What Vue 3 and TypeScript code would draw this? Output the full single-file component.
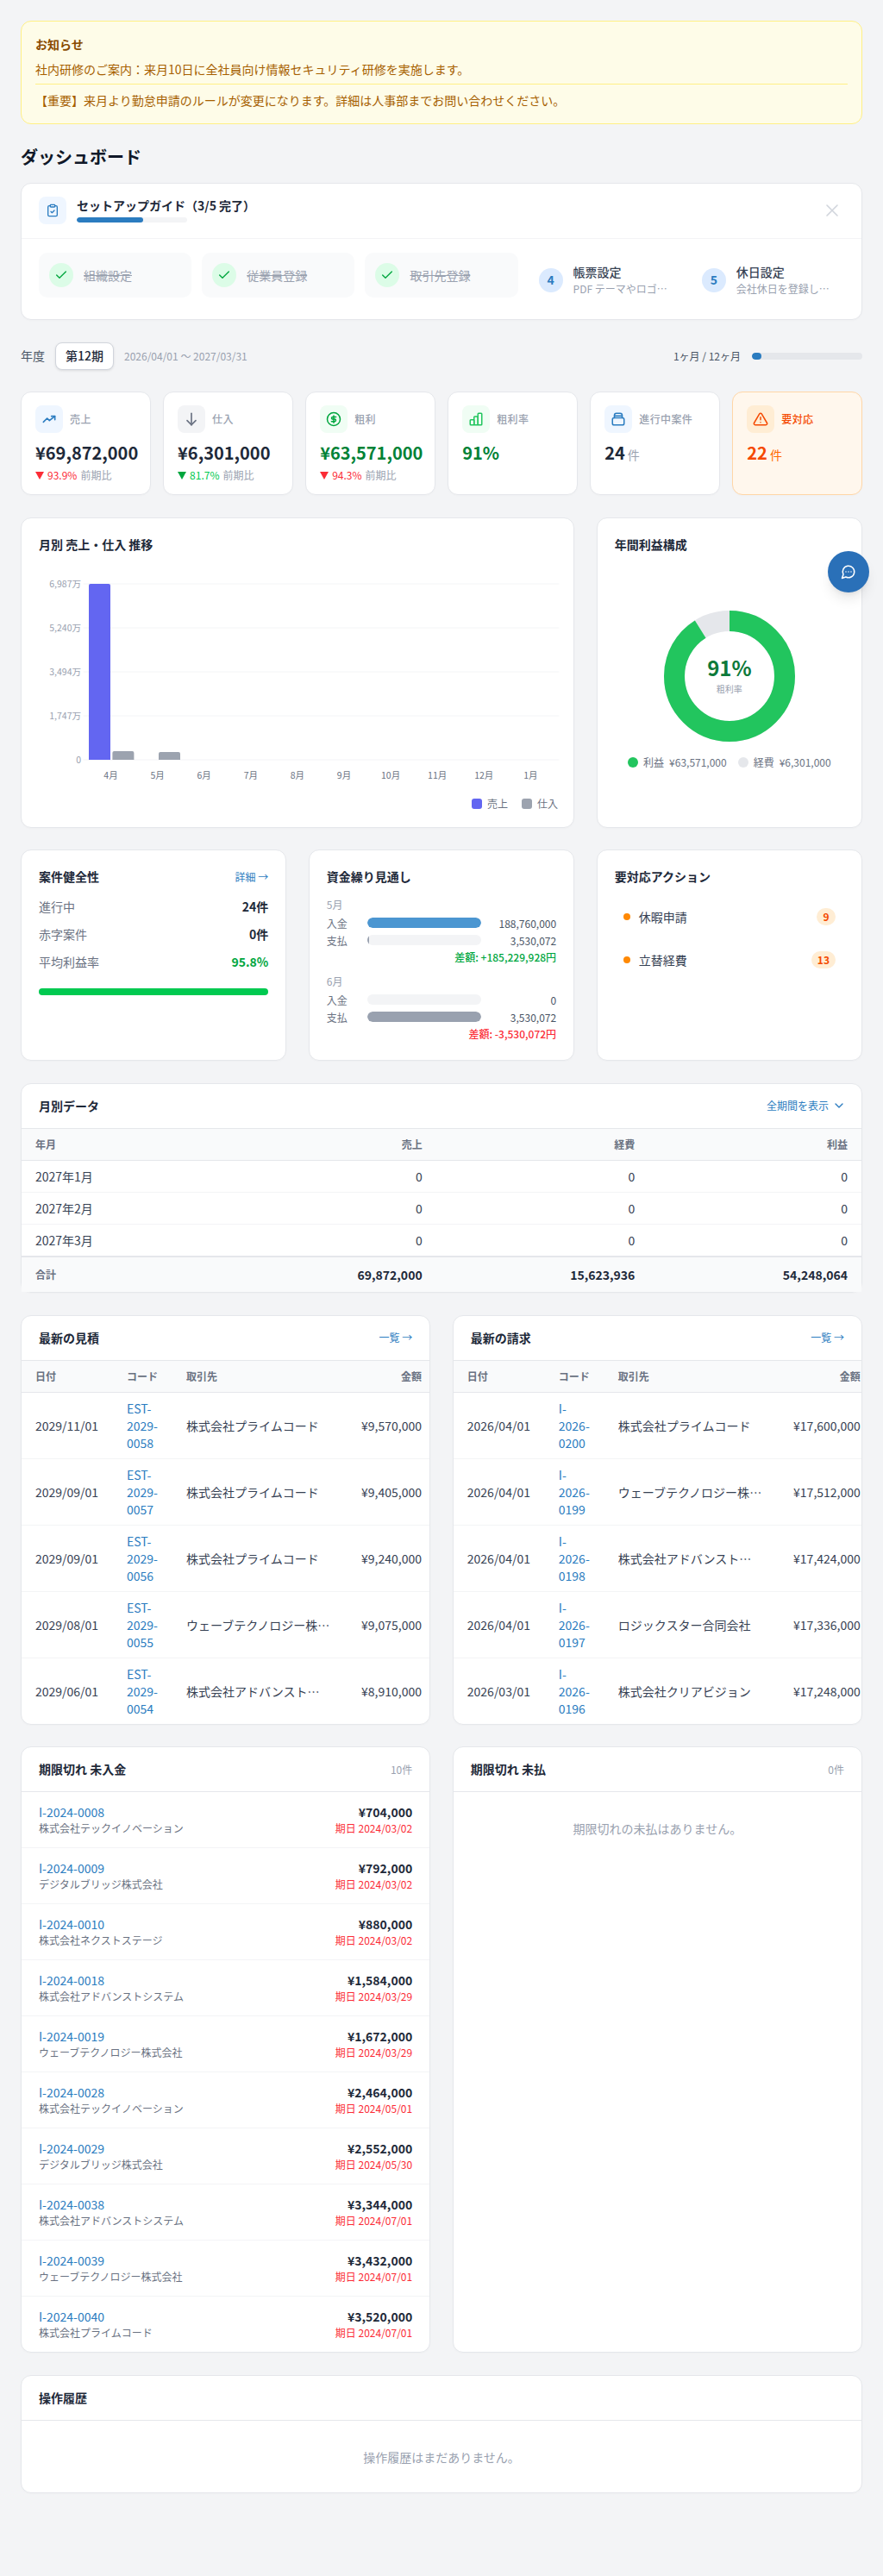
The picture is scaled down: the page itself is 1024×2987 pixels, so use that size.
<script setup lang="ts">
const steps = [
  { done: true, title: '組織設定' },
  { done: true, title: '従業員登録' },
  { done: true, title: '取引先登録' },
  { done: false, n: 4, title: '帳票設定', desc: 'PDF テーマやロゴを設定します' },
  { done: false, n: 5, title: '休日設定', desc: '会社休日を登録します' },
]
const kpis = [
  { key: 'blue', icon: 'trend', label: '売上', value: '¥69,872,000', arrow: 'down-red', pct: '93.9%', cls: '' },
  { key: 'gray', icon: 'down', label: '仕入', value: '¥6,301,000', arrow: 'down-green', pct: '81.7%', cls: '' },
  { key: 'green', icon: 'dollar', label: '粗利', value: '¥63,571,000', arrow: 'down-red', pct: '94.3%', cls: 'val-green' },
  { key: 'green', icon: 'bars', label: '粗利率', value: '91%', arrow: '', pct: '', cls: 'val-green' },
  { key: 'blue', icon: 'case', label: '進行中案件', value: '24', unit: '件', arrow: '', pct: '', cls: '' },
  { key: 'orange', icon: 'warn', label: '要対応', value: '22', unit: '件', arrow: '', pct: '', cls: 'val-orange' },
]
const gridY = [
  { y: 677, t: '6,987万' },
  { y: 728, t: '5,240万' },
  { y: 779, t: '3,494万' },
  { y: 830, t: '1,747万' },
  { y: 881, t: '0' },
]
const months = ['4月', '5月', '6月', '7月', '8月', '9月', '10月', '11月', '12月', '1月']
const health = [
  { l: '進行中', v: '24件', c: '' },
  { l: '赤字案件', v: '0件', c: '' },
  { l: '平均利益率', v: '95.8%', c: 'good' },
]
const flows = [
  { m: '5月', inc: '188,760,000', incW: 100, out: '3,530,072', outW: 1.9, diff: '差額: +185,229,928円', c: 'pos' },
  { m: '6月', inc: '0', incW: 0, out: '3,530,072', outW: 100, diff: '差額: -3,530,072円', c: 'neg' },
]
const actions = [
  { t: '休暇申請', n: 9 },
  { t: '立替経費', n: 13 },
]
const monthly = [
  ['2027年1月', '0', '0', '0'],
  ['2027年2月', '0', '0', '0'],
  ['2027年3月', '0', '0', '0'],
]
const estimates = [
  ['2029/11/01', 'EST-2029-0058', '株式会社プライムコード', '¥9,570,000'],
  ['2029/09/01', 'EST-2029-0057', '株式会社プライムコード', '¥9,405,000'],
  ['2029/09/01', 'EST-2029-0056', '株式会社プライムコード', '¥9,240,000'],
  ['2029/08/01', 'EST-2029-0055', 'ウェーブテクノロジー株式会社', '¥9,075,000'],
  ['2029/06/01', 'EST-2029-0054', '株式会社アドバンストシステム', '¥8,910,000'],
]
const invoices = [
  ['2026/04/01', 'I-2026-0200', '株式会社プライムコード', '¥17,600,000'],
  ['2026/04/01', 'I-2026-0199', 'ウェーブテクノロジー株式会社', '¥17,512,000'],
  ['2026/04/01', 'I-2026-0198', '株式会社アドバンストシステム', '¥17,424,000'],
  ['2026/04/01', 'I-2026-0197', 'ロジックスター合同会社', '¥17,336,000'],
  ['2026/03/01', 'I-2026-0196', '株式会社クリアビジョン', '¥17,248,000'],
]
const overdue = [
  ['I-2024-0008', '株式会社テックイノベーション', '¥704,000', '2024/03/02'],
  ['I-2024-0009', 'デジタルブリッジ株式会社', '¥792,000', '2024/03/02'],
  ['I-2024-0010', '株式会社ネクストステージ', '¥880,000', '2024/03/02'],
  ['I-2024-0018', '株式会社アドバンストシステム', '¥1,584,000', '2024/03/29'],
  ['I-2024-0019', 'ウェーブテクノロジー株式会社', '¥1,672,000', '2024/03/29'],
  ['I-2024-0028', '株式会社テックイノベーション', '¥2,464,000', '2024/05/01'],
  ['I-2024-0029', 'デジタルブリッジ株式会社', '¥2,552,000', '2024/05/30'],
  ['I-2024-0038', '株式会社アドバンストシステム', '¥3,344,000', '2024/07/01'],
  ['I-2024-0039', 'ウェーブテクノロジー株式会社', '¥3,432,000', '2024/07/01'],
  ['I-2024-0040', '株式会社プライムコード', '¥3,520,000', '2024/07/01'],
]
</script>

<template>
  <div class="page">
    <section class="notice">
      <div class="notice-title">お知らせ</div>
      <div class="notice-item first">社内研修のご案内：来月10日に全社員向け情報セキュリティ研修を実施します。</div>
      <div class="notice-item">【重要】来月より勤怠申請のルールが変更になります。詳細は人事部までお問い合わせください。</div>
    </section>

    <h1 class="page-title">ダッシュボード</h1>

    <div class="stack">
      <section class="card setup">
        <div class="setup-head">
          <div class="setup-icon">
            <svg viewBox="0 0 24 24" class="i16 c-primary"><rect x="8" y="2" width="8" height="4" rx="1"/><path d="M16 4h2a2 2 0 0 1 2 2v14a2 2 0 0 1-2 2H6a2 2 0 0 1-2-2V6a2 2 0 0 1 2-2h2"/><path d="m9 14 2 2 4-4"/></svg>
          </div>
          <div class="setup-meta">
            <div class="setup-title">セットアップガイド（3/5 完了）</div>
            <div class="setup-track"><div class="setup-fill"></div></div>
          </div>
          <svg viewBox="0 0 24 24" class="close"><path d="M18 6 6 18M6 6l12 12"/></svg>
        </div>
        <div class="setup-steps">
          <div v-for="s in steps" :key="s.title" class="step" :class="{ done: s.done }">
            <div class="step-dot">
              <svg v-if="s.done" viewBox="0 0 24 24" class="i16"><path d="M20 6 9 17l-5-5"/></svg>
              <span v-else>{{ s.n }}</span>
            </div>
            <div class="step-text">
              <div class="step-title">{{ s.title }}</div>
              <div v-if="s.desc" class="step-desc">{{ s.desc }}</div>
            </div>
          </div>
        </div>
      </section>

      <div class="period">
        <span class="period-label">年度</span>
        <span class="period-btn">第12期</span>
        <span class="period-range">2026/04/01 〜 2027/03/31</span>
        <span class="period-prog">1ヶ月 / 12ヶ月</span>
        <span class="period-track"><span class="period-fill"></span></span>
      </div>

      <div class="kpis">
        <div v-for="k in kpis" :key="k.label" class="card kpi" :class="{ 'kpi-alert': k.key === 'orange' }">
          <div class="kpi-head">
            <div class="kpi-icon" :class="'bg-' + k.key">
              <svg v-if="k.icon === 'trend'" viewBox="0 0 24 24" class="i16 thick"><path d="m2 17 6.5-6.5 4 4L22 7"/><path d="M16 7h6v6"/></svg>
              <svg v-else-if="k.icon === 'down'" viewBox="0 0 24 24" class="i20"><path d="M12 4v16"/><path d="m6 14 6 6 6-6"/></svg>
              <svg v-else-if="k.icon === 'dollar'" viewBox="0 0 24 24" class="i18"><circle cx="12" cy="12" r="10"/><path d="M15.5 8.5h-5a1.75 1.75 0 0 0 0 3.5h3a1.75 1.75 0 0 1 0 3.5h-5"/><path d="M12 6.5v11"/></svg>
              <svg v-else-if="k.icon === 'bars'" viewBox="0 0 24 24" class="i18 bars"><rect x="3" y="13" width="6" height="8" rx="1"/><rect x="9" y="8" width="6" height="13" rx="1"/><rect x="15" y="3" width="6" height="18" rx="1"/></svg>
              <svg v-else-if="k.icon === 'case'" viewBox="0 0 24 24" class="i18"><rect x="3" y="10" width="18" height="11" rx="2.5"/><path d="M6 10V6a3 3 0 0 1 3-3h6a3 3 0 0 1 3 3v4"/><path d="M6 7h12"/></svg>
              <svg v-else viewBox="0 0 24 24" class="i18"><path d="M10.3 3.9 2 18a2 2 0 0 0 1.7 3h16.6a2 2 0 0 0 1.7-3L13.7 3.9a2 2 0 0 0-3.4 0Z"/><path d="M12 9v4"/><path d="M12 17h.01"/></svg>
            </div>
            <span class="kpi-label">{{ k.label }}</span>
          </div>
          <div class="kpi-value" :class="k.cls">{{ k.value }}<span v-if="k.unit" class="kpi-unit">{{ k.unit }}</span></div>
          <div v-if="k.pct" class="kpi-delta">
            <span class="tri" :class="k.arrow"></span>
            <span :class="k.arrow === 'down-red' ? 'pct-red' : 'pct-green'">{{ k.pct }}</span>
            <span class="delta-note">前期比</span>
          </div>
        </div>
      </div>

      <div class="grid-3">
        <section class="card pad span-2 chart-card">
          <h2 class="card-title">月別 売上・仕入 推移</h2>
          <svg class="chart" viewBox="0 0 642 300" width="642" height="300">
            <g v-for="g in gridY" :key="g.y">
              <line x1="72" :x2="623" :y1="g.y - 634" :y2="g.y - 634" class="gridline"/>
              <text x="69" :y="g.y - 630" class="axis" text-anchor="end">{{ g.t }}</text>
            </g>
            <path d="M78 45a2 2 0 0 1 2-2h21a2 2 0 0 1 2 2v202H78Z" fill="#6366f1"/>
            <path d="M105.4 239a2 2 0 0 1 2-2h21a2 2 0 0 1 2 2v8h-25Z" fill="#9ca3af"/>
            <path d="M159 240a2 2 0 0 1 2-2h21a2 2 0 0 1 2 2v7h-25Z" fill="#9ca3af"/>
            <text v-for="(m, i) in months" :key="m" :x="103.5 + i * 54.1" y="269" class="axis month" text-anchor="middle">{{ m }}</text>
          </svg>
          <div class="chart-legend">
            <span class="lg"><i class="sw sw-p"></i>売上</span>
            <span class="lg"><i class="sw sw-g"></i>仕入</span>
          </div>
        </section>

        <section class="card pad donut-card">
          <h2 class="card-title">年間利益構成</h2>
          <div class="donut-wrap">
            <svg viewBox="0 0 152 152" width="152" height="152" class="donut">
              <circle cx="76" cy="76" r="64" class="ring" stroke="#e5e7eb"/>
              <circle cx="76" cy="76" r="64" class="ring" stroke="#22c55e" stroke-dasharray="365.9 402.1" transform="rotate(-90 76 76)"/>
            </svg>
            <div class="donut-center">
              <div class="donut-pct">91%</div>
              <div class="donut-sub">粗利率</div>
            </div>
          </div>
          <div class="donut-legend">
            <span class="lg"><i class="sw round sw-dg"></i>利益<span>¥63,571,000</span></span>
            <span class="lg"><i class="sw round sw-lg"></i>経費<span>¥6,301,000</span></span>
          </div>
        </section>

        <section class="card pad short">
          <div class="title-row">
            <h2 class="card-title">案件健全性</h2>
            <a class="link">詳細 →</a>
          </div>
          <div class="health-rows">
            <div v-for="h in health" :key="h.l" class="health-row">
              <span class="health-l">{{ h.l }}</span>
              <span class="health-v" :class="h.c">{{ h.v }}</span>
            </div>
          </div>
          <div class="health-bar"></div>
        </section>

        <section class="card pad short">
          <h2 class="card-title">資金繰り見通し</h2>
          <div class="flows">
            <div v-for="f in flows" :key="f.m" class="flow">
              <div class="flow-m">{{ f.m }}</div>
              <div class="flow-row">
                <span class="flow-l">入金</span>
                <span class="flow-track"><span class="flow-fill fill-in" :style="{ width: f.incW + '%' }"></span></span>
                <span class="flow-v">{{ f.inc }}</span>
              </div>
              <div class="flow-row">
                <span class="flow-l">支払</span>
                <span class="flow-track"><span class="flow-fill fill-out" :style="{ width: f.outW + '%' }"></span></span>
                <span class="flow-v">{{ f.out }}</span>
              </div>
              <div class="flow-diff" :class="f.c">{{ f.diff }}</div>
            </div>
          </div>
        </section>

        <section class="card pad short">
          <h2 class="card-title">要対応アクション</h2>
          <div class="actions">
            <div v-for="a in actions" :key="a.t" class="action">
              <i class="a-dot"></i>
              <span class="a-text">{{ a.t }}</span>
              <span class="a-badge">{{ a.n }}</span>
            </div>
          </div>
        </section>
      </div>

      <section class="card">
        <div class="head">
          <h2 class="card-title">月別データ</h2>
          <a class="link link-all">全期間を表示
            <svg viewBox="0 0 24 24" class="i16"><path d="m6 9 6 6 6-6"/></svg>
          </a>
        </div>
        <table class="mtable">
          <thead><tr><th>年月</th><th class="r">売上</th><th class="r">経費</th><th class="r">利益</th></tr></thead>
          <tbody>
            <tr v-for="r in monthly" :key="r[0]">
              <td v-for="(c, i) in r" :key="i" :class="{ r: i > 0 }">{{ c }}</td>
            </tr>
          </tbody>
          <tfoot>
            <tr><th>合計</th><td class="r">69,872,000</td><td class="r">15,623,936</td><td class="r">54,248,064</td></tr>
          </tfoot>
        </table>
      </section>

      <div class="grid-2">
        <section class="card clip">
          <div class="head"><h2 class="card-title">最新の見積</h2><a class="link">一覧 →</a></div>
          <table class="dtable est">
            <thead><tr><th class="c1">日付</th><th class="c2">コード</th><th class="c3">取引先</th><th class="c4 r">金額</th></tr></thead>
            <tbody>
              <tr v-for="r in estimates" :key="r[1]">
                <td>{{ r[0] }}</td><td class="code">{{ r[1] }}</td><td><div class="trunc">{{ r[2] }}</div></td><td class="r">{{ r[3] }}</td>
              </tr>
            </tbody>
          </table>
        </section>
        <section class="card clip">
          <div class="head"><h2 class="card-title">最新の請求</h2><a class="link">一覧 →</a></div>
          <table class="dtable inv">
            <thead><tr><th class="c1">日付</th><th class="c2">コード</th><th class="c3">取引先</th><th class="c4 r">金額</th></tr></thead>
            <tbody>
              <tr v-for="r in invoices" :key="r[1]">
                <td>{{ r[0] }}</td><td class="code">{{ r[1] }}</td><td><div class="trunc">{{ r[2] }}</div></td><td class="r">{{ r[3] }}</td>
              </tr>
            </tbody>
          </table>
        </section>
      </div>

      <div class="grid-2">
        <section class="card">
          <div class="head"><h2 class="card-title">期限切れ 未入金</h2><span class="count">10件</span></div>
          <div v-for="o in overdue" :key="o[0]" class="od-row">
            <div>
              <div class="od-id">{{ o[0] }}</div>
              <div class="od-client">{{ o[1] }}</div>
            </div>
            <div class="od-right">
              <div class="od-amt">{{ o[2] }}</div>
              <div class="od-date">期日 {{ o[3] }}</div>
            </div>
          </div>
        </section>
        <section class="card">
          <div class="head"><h2 class="card-title">期限切れ 未払</h2><span class="count">0件</span></div>
          <div class="empty-sm">期限切れの未払はありません。</div>
        </section>
      </div>

      <section class="card">
        <div class="head"><h2 class="card-title">操作履歴</h2></div>
        <div class="empty-lg">操作履歴はまだありません。</div>
      </section>
    </div>

    <button class="fab" aria-label="chat">
      <svg viewBox="0 0 24 24" class="i18"><path d="M7.9 20A9 9 0 1 0 4 16.1L2 22Z"/><path d="M8 12h.01M12 12h.01M16 12h.01"/></svg>
    </button>
  </div>
</template>

<style>
html, body { margin: 0; background: #f3f4f6; }
</style>

<style scoped>
* { box-sizing: border-box; }
.page {
  position: relative;
  min-height: 2987px;
  padding: 24px 24px 97px;
  background: #f3f4f6;
  font-family: "Noto Sans CJK JP", "Noto Sans", sans-serif;
  font-size: 14px;
  line-height: 21px;
  color: #1e2939;
}
svg { fill: none; stroke: currentColor; stroke-width: 2; stroke-linecap: round; stroke-linejoin: round; flex: none; display: block; }
.i16 { width: 16px; height: 16px; }
.i18 { width: 18px; height: 18px; }
.i20 { width: 20px; height: 20px; }
.c-primary { color: #2b7cc0; }
.thick { stroke-width: 2.4; }

.notice { background: #fefce8; border: 1px solid #fff085; border-radius: 12px; padding: 16px; color: #a65f00; }
.notice-title { font-weight: 700; color: #894b00; margin-bottom: 8px; }
.notice-item { padding-top: 8px; }
.notice-item.first { padding: 0 0 6px; border-bottom: 1px solid #fff085; }
.page-title { margin: 24px 0 16px; font-size: 20px; line-height: 28px; font-weight: 700; color: #101828; }

.stack { display: flex; flex-direction: column; gap: 25.6px; }
.card { background: #fff; border: 1px solid #e5e7eb; border-radius: 12px; box-shadow: 0 1px 2px rgba(0,0,0,.02); }
.clip { overflow: hidden; }
.pad { padding: 20px; }
.card-title { margin: 0; font-size: 14px; line-height: 21px; font-weight: 700; color: #1e2939; }
.link { color: #2b7cc0; font-size: 12px; line-height: 18px; }

.setup-head { display: flex; align-items: center; gap: 12px; padding: 15px 20px 16px; border-bottom: 1px solid #f3f4f6; }
.setup-icon { width: 32px; height: 32px; border-radius: 8px; background: #eff6ff; display: flex; align-items: center; justify-content: center; }
.setup-meta { flex: 1; }
.setup-title { font-weight: 700; line-height: 20px; margin-bottom: 4px; margin-top: -2px; }
.setup-track { width: 128px; height: 6px; border-radius: 3px; background: #f3f4f6; overflow: hidden; }
.setup-fill { width: 60%; height: 100%; background: #2b7cc0; border-radius: 3px; }
.close { width: 24px; height: 24px; margin-right: 2.5px; color: #d1d5dc; stroke-width: 1.6; }
.setup-steps { display: grid; grid-template-columns: repeat(5, minmax(0, 1fr)); gap: 12px; padding: 16px 20px 14px; align-items: start; }
.step { display: flex; align-items: center; gap: 12px; padding: 12px; border-radius: 10px; min-width: 0; }
.step.done { background: #f9fafb; }
.step-dot { width: 28px; height: 28px; border-radius: 50%; flex: none; background: #dbeafe; color: #2b7cc0; font-size: 14px; font-weight: 700; display: flex; align-items: center; justify-content: center; }
.step.done .step-dot { background: #dcfce7; color: #00a63e; }
.step-text { min-width: 0; }
.step-title { font-weight: 500; color: #364153; }
.step.done .step-title { font-weight: 400; color: #99a1af; text-decoration: line-through; }
.step-desc { font-size: 12px; line-height: 18px; color: #99a1af; white-space: nowrap; overflow: hidden; text-overflow: ellipsis; }

.period { display: flex; align-items: center; height: 32px; font-size: 14px; color: #4a5565; }
.period-btn { margin-left: 12px; width: 68px; height: 32px; background: #fff; border: 1px solid #d1d5dc; border-radius: 8px; box-shadow: 0 1px 3px rgba(0,0,0,.1); font-weight: 500; font-size: 14px; color: #1e2939; display: flex; align-items: center; justify-content: center; }
.period-range { margin-left: 12px; font-size: 12px; color: #99a1af; }
.period-prog { margin-left: auto; font-size: 12px; color: #4a5565; }
.period-track { margin-left: 13px; width: 128px; height: 8px; background: #e5e7eb; border-radius: 4px; overflow: hidden; display: block; }
.period-fill { display: block; width: 8.33%; height: 100%; background: #2b7cc0; border-radius: 4px; }

.kpis { display: grid; grid-template-columns: repeat(6, minmax(0, 1fr)); gap: 14.4px; }
.kpi { height: 120px; padding: 15px 16px; }
.kpi-alert { background: #fff7ed; border-color: #ffd6a7; }
.kpi-head { display: flex; align-items: center; gap: 8px; }
.kpi-icon { width: 32px; height: 32px; border-radius: 8px; display: flex; align-items: center; justify-content: center; }
.bg-blue { background: #eff6ff; color: #2b7cc0; }
.bg-gray { background: #f3f4f6; color: #6a7282; }
.bg-green { background: #f0fdf4; color: #00a63e; }
.bg-orange { background: #ffedd4; color: #f54900; }
.bars { color: #22c55e; }
.kpi-label { font-size: 12px; line-height: 18px; font-weight: 500; letter-spacing: .4px; color: #99a1af; }
.kpi-alert .kpi-label { color: #f54900; }
.kpi-value { margin-top: 7px; font-size: 20px; line-height: 32px; font-weight: 700; color: #1e2939; white-space: nowrap; }
.val-green { color: #008236; }
.val-orange { color: #f54900; }
.kpi-unit { margin-left: 3px; font-size: 14px; font-weight: 400; color: #99a1af; }
.val-orange .kpi-unit { color: #ff6900; }
.kpi-delta { margin-top: 1px; display: flex; align-items: center; gap: 4px; font-size: 12px; line-height: 18px; white-space: nowrap; }
.tri { width: 0; height: 0; border-left: 5.5px solid transparent; border-right: 5.5px solid transparent; border-top: 9px solid #fb2c36; }
.tri.down-green { border-top-color: #00a63e; }
.pct-red { color: #fb2c36; }
.pct-green { color: #00c950; }
.delta-note { color: #99a1af; }

.grid-3 { display: grid; grid-template-columns: repeat(3, minmax(0, 1fr)); gap: 25.6px; }
.grid-2 { display: grid; grid-template-columns: repeat(2, minmax(0, 1fr)); gap: 25.6px; }
.span-2 { grid-column: span 2; }
.chart-card { height: 360px; padding: 20px; position: relative; }
.chart-card .chart { position: absolute; left: 0; top: 33px; stroke: none; }
.gridline { stroke: #f3f4f6; stroke-width: 1; }
.axis { font-size: 10.5px; fill: #99a1af; stroke: none; }
.month { fill: #6a7282; }
.chart-legend { position: absolute; right: 18px; bottom: 18px; display: flex; gap: 16px; }
.lg { display: inline-flex; align-items: center; gap: 6px; font-size: 12px; line-height: 18px; color: #6a7282; white-space: nowrap; }
.sw { width: 12px; height: 12px; border-radius: 3px; display: block; }
.sw.round { border-radius: 50%; }
.sw-p { background: #6366f1; }
.sw-g { background: #9ca3af; }
.sw-dg { background: #22c55e; }
.sw-lg { background: #e5e7eb; }
.donut-card { height: 360px; }
.donut-wrap { position: relative; width: 152px; height: 152px; margin: 66px auto 0; }
.donut { stroke: none; }
.ring { fill: none; stroke-width: 24; stroke-linecap: butt; }
.donut-center { position: absolute; inset: 0; padding-bottom: 4px; display: flex; flex-direction: column; align-items: center; justify-content: center; }
.donut-pct { font-size: 24px; line-height: 32px; font-weight: 700; color: #0d7a3a; }
.donut-sub { font-size: 10px; line-height: 14px; color: #99a1af; margin-top: 2px; }
.donut-legend { margin-top: 15px; display: flex; justify-content: center; gap: 13px; }

.short { height: 245px; }
.title-row { display: flex; justify-content: space-between; align-items: center; }
.health-rows { margin-top: 14px; display: flex; flex-direction: column; gap: 11px; }
.health-row { display: flex; justify-content: space-between; }
.health-l { color: #6a7282; }
.health-v { font-weight: 700; color: #1e2939; }
.health-v.good { color: #00a63e; }
.health-bar { margin-top: 20px; height: 8px; background: #00c950; border-radius: 4px; }

.flows { margin-top: 13px; display: flex; flex-direction: column; gap: 9px; }
.flow-m { font-size: 12px; line-height: 18px; color: #99a1af; margin-bottom: 2px; }
.flow-row { display: flex; align-items: center; height: 20px; font-size: 12px; color: #6a7282; }
.flow-l { width: 47px; flex: none; }
.flow-track { width: 132px; height: 12px; flex: none; background: #f3f4f6; border-radius: 6px; overflow: hidden; display: block; }
.flow-fill { display: block; height: 100%; border-radius: 6px; }
.fill-in { background: #4b96d1; }
.fill-out { background: #99a1af; }
.flow-v { margin-left: auto; color: #4a5565; }
.flow-diff { text-align: right; font-size: 12px; line-height: 20px; font-weight: 500; }
.pos { color: #00a63e; }
.neg { color: #fb2c36; }

.actions { margin-top: 14px; display: flex; flex-direction: column; gap: 6px; }
.action { display: flex; align-items: center; height: 44px; padding: 0 10px; }
.a-dot { width: 8px; height: 8px; border-radius: 50%; background: #ff8904; }
.a-text { margin-left: 10px; color: #364153; }
.a-badge { margin-left: auto; min-width: 22px; height: 20px; padding: 0 7px; border-radius: 10px; background: #ffedd4; color: #f54900; font-size: 12px; line-height: 20px; font-weight: 700; text-align: center; }

.head { display: flex; align-items: center; justify-content: space-between; padding: 15px 20px; border-bottom: 1px solid #e5e7eb; }
.link-all { display: flex; align-items: center; gap: 4px; margin-right: -2px; }

table { border-collapse: collapse; }
.mtable { width: 100%; table-layout: fixed; }
.mtable th, .mtable td { padding: 8px 16px; text-align: left; line-height: 20px; }
.mtable thead th { background: #f9fafb; font-size: 12px; font-weight: 700; color: #6a7282; border-bottom: 1px solid #e5e7eb; }
.mtable th:first-child { width: 234px; }
.mtable tbody td { border-bottom: 1px solid #f3f4f6; color: #364153; }
.mtable tbody tr:last-child td { border-bottom: 2px solid #e5e7eb; }
.mtable tfoot th, .mtable tfoot td { background: #f9fafb; padding: 10px 16px; }
.mtable tfoot th { font-size: 12px; font-weight: 700; color: #6a7282; }
.mtable tfoot td { font-weight: 700; color: #1e2939; }
.mtable .r, .dtable .r { text-align: right; }

.dtable { table-layout: fixed; }
.est { width: 480px; }
.inv { width: 488px; }
.dtable th, .dtable td { padding: 8px 16px; text-align: left; line-height: 20px; }
.dtable th { background: #f9fafb; font-size: 12px; font-weight: 700; color: #6a7282; border-bottom: 1px solid #e5e7eb; }
.dtable td { color: #364153; border-bottom: 1px solid #f3f4f6; }
.dtable tbody tr:last-child td { border-bottom: 0; }
.c1 { width: 106px; }
.c2 { width: 69px; }
.c3 { width: 201px; }
.dtable .code { color: #2b7cc0; word-break: normal; overflow-wrap: normal; }
.trunc { max-width: 168px; white-space: nowrap; overflow: hidden; text-overflow: ellipsis; }

.count { font-size: 12px; line-height: 18px; color: #99a1af; }
.od-row { height: 65px; padding: 0 20px; display: flex; align-items: center; justify-content: space-between; border-bottom: 1px solid #f3f4f6; }
.od-row:last-child { height: 64px; border-bottom: 0; }
.od-id { color: #2b7cc0; line-height: 20px; }
.od-client { font-size: 12px; line-height: 18px; color: #6a7282; }
.od-right { text-align: right; }
.od-amt { font-weight: 700; line-height: 20px; color: #1e2939; }
.od-date { font-size: 12px; line-height: 18px; color: #fb2c36; }
.empty-sm { padding: 32px 20px; text-align: center; color: #99a1af; }
.empty-lg { padding: 32px 20px 30px; text-align: center; color: #99a1af; }

.fab { position: absolute; left: 960px; top: 639px; width: 48px; height: 48px; border: 0; border-radius: 50%; padding: 0; background: #2a70b8; color: #fff; display: flex; align-items: center; justify-content: center; box-shadow: 0 10px 15px -3px rgba(0,0,0,.1), 0 4px 6px -4px rgba(0,0,0,.1); }
</style>
